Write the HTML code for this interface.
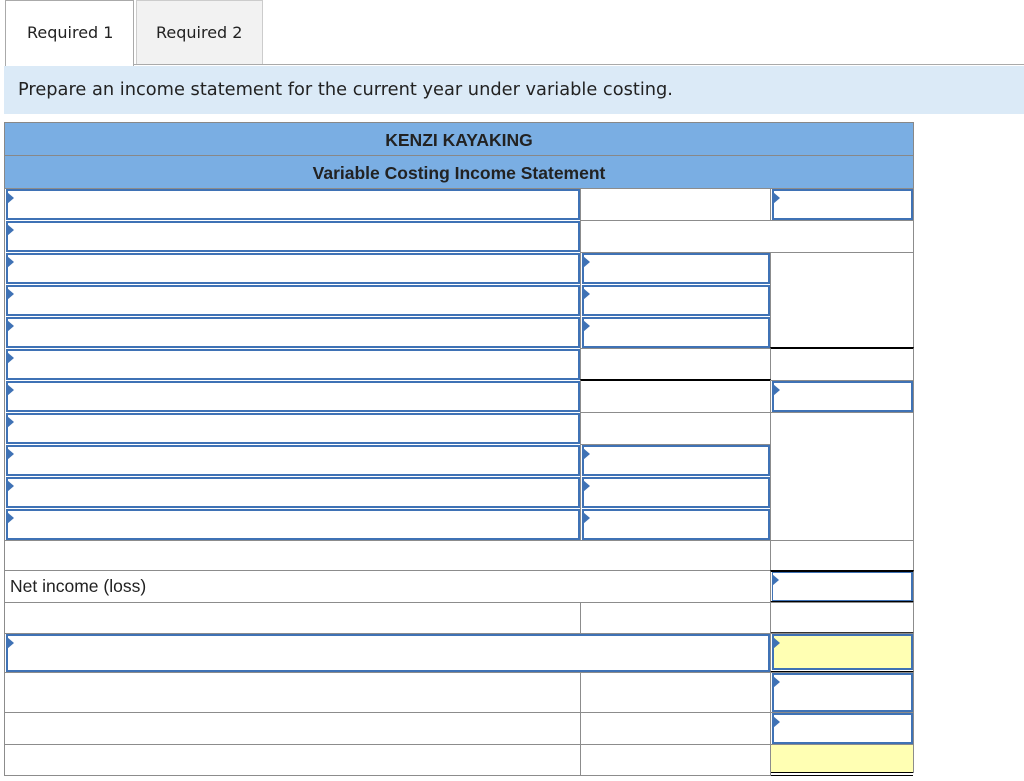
<!DOCTYPE html>
<html><head><style>
body{margin:0;width:1024px;height:781px;background:#fff;position:relative;overflow:hidden;font-family:"Liberation Sans",Arial,sans-serif}
div{position:absolute;box-sizing:border-box}
.c{border:1px solid #8c8c8c;background:#fff}
.i{border:2px solid #3f72b5;background:#fff}
.y{background:#ffffb3}
.i::before{content:"";position:absolute;left:-1px;top:1px;border-left:7px solid #3f72b5;border-top:6px solid transparent;border-bottom:6px solid transparent}
.bk{border-top:2px solid #000}
</style></head><body>
<div style="left:133px;top:64px;width:891px;height:1px;background:#aaa"></div>
<div style="left:5px;top:0;width:129px;height:66px;border:1px solid #aaa;border-bottom:none;background:#fff;font:16px 'DejaVu Sans',sans-serif;color:#222;padding:22px 0 0 21px">Required 1</div>
<div style="left:136px;top:0;width:127px;height:64px;border:1px solid #ccc;border-bottom:none;background:#f2f2f2;font:16px 'DejaVu Sans',sans-serif;color:#222;padding:22px 0 0 19px">Required 2</div>
<div style="left:4px;top:66px;width:1020px;height:48px;background:#dbeaf7;font:17.8px 'DejaVu Sans',sans-serif;color:#222;padding:13px 0 0 14px">Prepare an income statement for the current year under variable costing.</div>

<div style="left:4px;top:122px;width:910px;height:34px;background:#7aaee3;border:1px solid #888;font-weight:bold;font-size:17.5px;color:#222;text-align:center;padding-top:7px">KENZI KAYAKING</div>
<div style="left:4px;top:155px;width:910px;height:34px;background:#7aaee3;border:1px solid #888;font-weight:bold;font-size:17.5px;color:#222;text-align:center;padding-top:7px">Variable Costing Income Statement</div>

<div class="c" style="left:4px;top:188px;width:577px;height:365px"></div>
<div class="i" style="left:6px;top:189px;width:574px;height:31px"></div>
<div class="i" style="left:6px;top:221px;width:574px;height:31px"></div>
<div class="i" style="left:6px;top:253px;width:574px;height:31px"></div>
<div class="i" style="left:6px;top:285px;width:574px;height:31px"></div>
<div class="i" style="left:6px;top:317px;width:574px;height:31px"></div>
<div class="i" style="left:6px;top:349px;width:574px;height:31px"></div>
<div class="i" style="left:6px;top:381px;width:574px;height:31px"></div>
<div class="i" style="left:6px;top:413px;width:574px;height:31px"></div>
<div class="i" style="left:6px;top:445px;width:574px;height:31px"></div>
<div class="i" style="left:6px;top:477px;width:574px;height:31px"></div>
<div class="i" style="left:6px;top:509px;width:574px;height:31px"></div>

<div class="c" style="left:580px;top:188px;width:191px;height:33px"></div>
<div class="c" style="left:770px;top:188px;width:144px;height:33px"></div>
<div class="i" style="left:772px;top:189px;width:141px;height:31px"></div>
<div class="c" style="left:580px;top:220px;width:334px;height:33px"></div>
<div class="c" style="left:580px;top:252px;width:191px;height:97px"></div>
<div class="i" style="left:582px;top:253px;width:188px;height:31px"></div>
<div class="i" style="left:582px;top:285px;width:188px;height:31px"></div>
<div class="i" style="left:582px;top:317px;width:188px;height:31px"></div>
<div class="c" style="left:770px;top:252px;width:144px;height:97px"></div>
<div class="c" style="left:580px;top:348px;width:191px;height:33px"></div>
<div class="c bk" style="left:770px;top:347px;width:144px;height:34px"></div>
<div class="c bk" style="left:580px;top:379px;width:191px;height:34px"></div>
<div class="c" style="left:770px;top:380px;width:144px;height:33px"></div>
<div class="i" style="left:772px;top:381px;width:141px;height:31px"></div>
<div class="c" style="left:580px;top:412px;width:191px;height:129px"></div>
<div class="i" style="left:582px;top:445px;width:188px;height:31px"></div>
<div class="i" style="left:582px;top:477px;width:188px;height:31px"></div>
<div class="i" style="left:582px;top:509px;width:188px;height:31px"></div>
<div class="c" style="left:580px;top:412px;width:191px;height:33px"></div>
<div class="c" style="left:770px;top:412px;width:144px;height:129px"></div>

<div class="c" style="left:4px;top:540px;width:767px;height:31px"></div>
<div class="c" style="left:770px;top:540px;width:144px;height:31px"></div>
<div class="c" style="left:4px;top:570px;width:767px;height:33px;font-size:17.5px;color:#222;padding:5px 0 0 5px">Net income (loss)</div>
<div class="c" style="left:770px;top:570px;width:144px;height:33px;border-top:2px solid #000;border-bottom:2px solid #000"></div>
<div class="i" style="left:772px;top:572px;width:141px;height:29px;border-width:1px 2px 1px 1px"></div>
<div class="c" style="left:4px;top:602px;width:577px;height:32px"></div>
<div class="c" style="left:580px;top:602px;width:191px;height:32px"></div>
<div class="c" style="left:770px;top:602px;width:144px;height:32px;border-bottom:2px solid #333"></div>
<div class="c" style="left:4px;top:633px;width:767px;height:40px"></div>
<div class="i" style="left:6px;top:634px;width:764px;height:38px"></div>
<div class="c" style="left:770px;top:633px;width:144px;height:40px;border-bottom:2px solid #000"></div>
<div class="i y" style="left:772px;top:634px;width:141px;height:36px"></div>
<div class="c" style="left:4px;top:672px;width:577px;height:41px"></div>
<div class="c" style="left:580px;top:672px;width:191px;height:41px"></div>
<div class="c" style="left:770px;top:672px;width:144px;height:41px"></div>
<div class="i" style="left:772px;top:673px;width:141px;height:39px"></div>
<div class="c" style="left:4px;top:712px;width:577px;height:33px"></div>
<div class="c" style="left:580px;top:712px;width:191px;height:33px"></div>
<div class="c" style="left:770px;top:712px;width:144px;height:33px"></div>
<div class="i" style="left:772px;top:713px;width:141px;height:31px"></div>
<div class="c" style="left:4px;top:744px;width:577px;height:32px"></div>
<div class="c" style="left:580px;top:744px;width:191px;height:32px"></div>
<div class="c y" style="left:770px;top:744px;width:144px;height:29px;border-bottom:none"></div>
<div style="left:771px;top:772px;width:142px;height:4px;border-top:1px solid #000;border-bottom:1px solid #000;background:#fff"></div>
</body></html>
